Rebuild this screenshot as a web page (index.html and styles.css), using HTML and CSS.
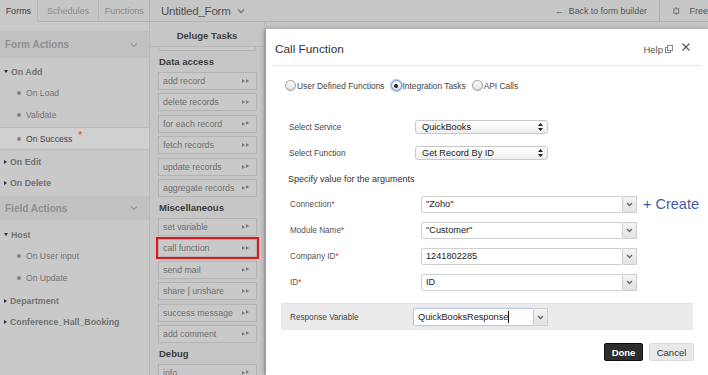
FILE: index.html
```html
<!DOCTYPE html>
<html>
<head>
<meta charset="utf-8">
<link rel="stylesheet" href="styles.css">
</head>
<body>
<div class="app">
  <header class="topbar">
    <nav class="tabs">
      <span class="tab active">Forms</span>
      <span class="tab">Schedules</span>
      <span class="tab">Functions</span>
    </nav>
    <div class="formname">Untitled_Form <svg class="chev" width="8" height="6" viewBox="0 0 8 6"><path d="M1 1.5 L4 4.5 L7 1.5" fill="none" stroke="#777" stroke-width="1.4"/></svg></div>
    <div class="spacer"></div>
    <div class="back">&larr;&nbsp; Back to form builder</div>
    <div class="free"><svg width="12" height="12" viewBox="0 0 12 12"><rect x="2.5" y="3" width="7" height="6" fill="none" stroke="#666" stroke-width="1.2"/><path d="M6 0.5 V3 M6 9 V11.5" stroke="#666" stroke-width="1.2"/></svg><span>Free</span></div>
  </header>
  <div class="main">
    <aside class="sidebar">
      <div class="group-head head-form"><span>Form Actions</span><svg width="8" height="6" viewBox="0 0 8 6"><path d="M1 1.5 L4 4.5 L7 1.5" fill="none" stroke="#9a9a9a" stroke-width="1.2"/></svg></div>
      <div class="node open">On Add</div>
      <div class="leaf">On Load</div>
      <div class="leaf">Validate</div>
      <div class="leaf selected">On Success <span class="req">*</span></div>
      <div class="node">On Edit</div>
      <div class="node">On Delete</div>
      <div class="group-head head-field"><span>Field Actions</span><svg width="8" height="6" viewBox="0 0 8 6"><path d="M1 1.5 L4 4.5 L7 1.5" fill="none" stroke="#9a9a9a" stroke-width="1.2"/></svg></div>
      <div class="node open">Host</div>
      <div class="leaf">On User input</div>
      <div class="leaf">On Update</div>
      <div class="node dept">Department</div>
      <div class="node">Conference_Hall_Booking</div>
    </aside>
    <section class="tasks">
      <div class="tasks-head">Deluge Tasks</div>
      <div class="search"></div>
      <div class="sec first">Data access</div>
      <div class="task">add record<i></i></div>
      <div class="task">delete records<i></i></div>
      <div class="task">for each record<i></i></div>
      <div class="task">fetch records<i></i></div>
      <div class="task">update records<i></i></div>
      <div class="task">aggregate records<i></i></div>
      <div class="sec">Miscellaneous</div>
      <div class="task">set variable<i></i></div>
      <div class="task hl">call function<i></i></div>
      <div class="task">send mail<i></i></div>
      <div class="task">share | unshare<i></i></div>
      <div class="task">success message<i></i></div>
      <div class="task">add comment<i></i></div>
      <div class="sec">Debug</div>
      <div class="task">info<i></i></div>
    </section>
    <section class="canvas"></section>
  </div>

  <div class="modal">
    <div class="m-head">
      <h1>Call Function</h1>
      <span class="help">Help <svg width="8" height="8" viewBox="0 0 8 8"><rect x="0.5" y="2.5" width="5" height="5" fill="#fff" stroke="#888"/><rect x="2.5" y="0.5" width="5" height="5" fill="#fff" stroke="#888"/></svg></span>
      <svg class="close" width="8" height="8" viewBox="0 0 8 8"><path d="M0.5 0.5 L7.5 7.5 M7.5 0.5 L0.5 7.5" stroke="#555" stroke-width="1.1"/></svg>
    </div>
    <div class="radios">
      <label class="radio"><span class="rb"></span>User Defined Functions</label>
      <label class="radio"><span class="rb on"></span>Integration Tasks</label>
      <label class="radio"><span class="rb"></span>API Calls</label>
    </div>
    <div class="srow"><span class="lbl">Select Service</span><div class="select">QuickBooks<svg width="5" height="8" viewBox="0 0 5 8"><path d="M0 3 L2.5 0 L5 3Z M0 5 L2.5 8 L5 5Z" fill="#222"/></svg></div></div>
    <div class="srow"><span class="lbl">Select Function</span><div class="select">Get Record By ID<svg width="5" height="8" viewBox="0 0 5 8"><path d="M0 3 L2.5 0 L5 3Z M0 5 L2.5 8 L5 5Z" fill="#222"/></svg></div></div>
    <div class="spec">Specify value for the arguments</div>
    <div class="arow"><span class="lbl">Connection<b>*</b></span><div class="combo"><div class="inp">"Zoho"</div><div class="dd"><svg width="7" height="5" viewBox="0 0 7 5"><path d="M1 1 L3.5 3.5 L6 1" fill="none" stroke="#666" stroke-width="1.3"/></svg></div></div><span class="create">+ Create</span></div>
    <div class="arow"><span class="lbl">Module Name<b>*</b></span><div class="combo"><div class="inp">"Customer"</div><div class="dd"><svg width="7" height="5" viewBox="0 0 7 5"><path d="M1 1 L3.5 3.5 L6 1" fill="none" stroke="#666" stroke-width="1.3"/></svg></div></div></div>
    <div class="arow"><span class="lbl">Company ID<b>*</b></span><div class="combo"><div class="inp">1241802285</div><div class="dd"><svg width="7" height="5" viewBox="0 0 7 5"><path d="M1 1 L3.5 3.5 L6 1" fill="none" stroke="#666" stroke-width="1.3"/></svg></div></div></div>
    <div class="arow"><span class="lbl">ID<b>*</b></span><div class="combo"><div class="inp">ID</div><div class="dd"><svg width="7" height="5" viewBox="0 0 7 5"><path d="M1 1 L3.5 3.5 L6 1" fill="none" stroke="#666" stroke-width="1.3"/></svg></div></div></div>
    <div class="resp">
      <span class="lbl">Response Variable</span>
      <div class="combo small"><div class="inp">QuickBooksResponse<span class="caret"></span></div><div class="dd"><svg width="7" height="5" viewBox="0 0 7 5"><path d="M1 1 L3.5 3.5 L6 1" fill="none" stroke="#666" stroke-width="1.3"/></svg></div></div>
    </div>
    <div class="actions">
      <button class="btn done">Done</button>
      <button class="btn cancel">Cancel</button>
    </div>
  </div>
</div>
</body>
</html>
```

FILE: styles.css
```css
* { box-sizing: border-box; }
html, body { margin: 0; padding: 0; }
body {
  width: 708px; height: 375px; overflow: hidden;
  font-family: "Liberation Sans", Arial, sans-serif;
  background: #c8c8c8;
  color: #333;
}
.app { position: relative; width: 708px; height: 375px; display: flex; flex-direction: column; }

/* top bar */
.topbar {
  height: 22px; display: flex; align-items: stretch;
  background: #c6c6c6; border-bottom: 1px solid #b3b3b3;
}
.tabs { display: flex; width: 150px; border-right: 1px solid #b3b3b3; }
.tab {
  font-size: 9px; color: #8a8a8a; display: flex; align-items: center; justify-content: center;
  border-right: 1px solid #b7b7b7; height: 21px;
}
.tab:nth-child(1) { width: 38px; color: #3d3d3d; background: #c8c8c8; height: 22px; }
.tab:nth-child(2) { width: 62px; }
.tab:nth-child(3) { width: 50px; border-right: none; }
.formname { font-size: 11.5px; color: #4f4f4f; padding-left: 11px; display: flex; align-items: center; gap: 6px; letter-spacing: -0.2px; }
.spacer { flex: 1; }
.back { font-size: 8.8px; color: #555; display: flex; align-items: center; padding-right: 12px; border-right: 1px solid #b0b0b0; }
.free { font-size: 9px; color: #555; display: flex; align-items: center; gap: 9px; padding-left: 12px; width: 48px; overflow: hidden; white-space: nowrap; }

.main { flex: 1; display: flex; }

/* sidebar */
.sidebar { width: 150px; background: #c9c9c9; border-right: 1px solid #b8b8b8; padding-top: 9px; white-space: nowrap; }
.group-head {
  display: flex; justify-content: space-between; align-items: center;
  height: 27px; padding: 0 11px 0 5px; background: #c1c1c1;
  font-size: 10px; font-weight: bold; color: #8f8f8f;
}
.head-form { margin-bottom: 3px; }
.head-field { margin-top: 3px; margin-bottom: 4px; height: 24px; }
.node {
  height: 21px; display: flex; align-items: center; padding-left: 4px;
  font-size: 8.8px; font-weight: bold; color: #727272;
}
.node.dept { margin-top: 1px; }
.node::before {
  content: ""; display: inline-block; width: 0; height: 0; margin-right: 3px;
  border-top: 2.5px solid transparent; border-bottom: 2.5px solid transparent; border-left: 3px solid #2b2b4a;
}
.node.open::before {
  border-left: 2.5px solid transparent; border-right: 2.5px solid transparent; border-top: 3px solid #2b2b4a; border-bottom: 0;
}
.leaf {
  height: 22px; display: flex; align-items: center; padding-left: 17px;
  font-size: 8.6px; color: #747474;
}
.leaf::before {
  content: ""; width: 4px; height: 4px; border-radius: 50%; background: #858585; margin-right: 5px;
}
.leaf.selected { background: #d0d0d0; border-top: 1px solid #bcbcbc; border-bottom: 1px solid #bcbcbc; color: #3f3f3f; height: 23px; margin: 1px 0 1px; }
.req { color: #d6473d; font-size: 10px; margin-left: 6px; position: relative; top: -3px; }

/* tasks */
.tasks { width: 115px; background: #c6c6c6; border-right: 1px solid #b7b7b7; white-space: nowrap; }
.tasks-head { height: 25px; padding-top: 3px; display: flex; align-items: center; justify-content: center; font-size: 9.5px; font-weight: bold; color: #3e3e3e; border-bottom: 1px solid #b7b7b7; }
.search { height: 4px; margin: 0 8px 0 8px; border: 1px solid #b5b5b5; border-top: none; border-radius: 0 0 3px 3px; background: #cacaca; }
.sec { height: 21px; margin-top: -3.4px; display: flex; align-items: center; padding-left: 9px; font-size: 9.5px; font-weight: bold; color: #3a3a3a; }
.sec.first { height: 21px; margin-top: 0; }
.task {
  height: 18px; margin: 0 7px 3.4px 8px; border: 1px solid #b3b3b3; background: #c9c9c9;
  font-size: 8.8px; color: #6f6f6f; display: flex; align-items: center; justify-content: space-between; padding: 0 4px;
}
.task i { width: 0; height: 0; border-top: 2.5px solid transparent; border-bottom: 2.5px solid transparent; border-left: 3px solid #7a7a7a; position: relative; margin-right: 7px; }
.task i::after { content: ""; position: absolute; left: 1px; top: -2.5px; border-top: 2.5px solid transparent; border-bottom: 2.5px solid transparent; border-left: 3px solid #7a7a7a; }
.task.hl { outline: 2px solid #e2141b; outline-offset: 0px; }
.canvas { flex: 1; background: #c4c4c4; }

/* modal */
.modal {
  position: absolute; left: 266px; top: 29px; right: 0; bottom: 0;
  background: #fff; box-shadow: -2px 0 4px rgba(0,0,0,0.25);
  padding: 0 6px 0 6px;
}
.m-head { height: 37px; display: flex; align-items: center; border-bottom: 1px solid #e6e6e6; padding: 4px 0 0 3px; }
.m-head h1 { margin: 0; font-size: 11.8px; font-weight: normal; color: #333; flex: 1; }
.help { font-size: 9.5px; color: #555; display: flex; align-items: center; gap: 2px; margin-right: 9px; }
.close { margin-right: 12px; margin-top: -5px; }

.radios { display: flex; align-items: center; height: 38px; padding-left: 13px; padding-top: 1px; }
.radio { display: flex; align-items: center; font-size: 8.4px; color: #444; margin-right: 6px; }
.rb { width: 11px; height: 11px; border-radius: 50%; border: 1px solid #9b9b9b; background: linear-gradient(#fff, #ddd); margin-right: 1px; display: flex; align-items: center; justify-content: center; }
.rb.on { border-color: #6b8fd3; box-shadow: 0 0 1px 1px #a9c2ee; }
.rb.on::after { content: ""; width: 4px; height: 4px; border-radius: 50%; background: #222; }

.lbl { font-size: 8.2px; color: #444; width: 126px; flex: none; }
.lbl b { color: #e03030; font-weight: normal; }
.srow { display: flex; align-items: center; height: 26px; padding-left: 17px; }
.radios + .srow { margin-top: 10px; }
.select {
  width: 133px; height: 14px; border: 1px solid #c9c9c9; border-radius: 3px;
  background: linear-gradient(#ffffff, #eeeeee); font-size: 9.2px; color: #222;
  display: flex; align-items: center; justify-content: space-between; padding: 0 4px 0 6px;
}
.spec { font-size: 9px; color: #333; height: 25px; display: flex; align-items: center; padding-left: 16px; }
.arow { display: flex; align-items: center; height: 26px; padding-left: 18px; }
.arow .lbl { width: 131px; color: #555; }
.combo { display: flex; align-items: stretch; height: 17px; }
.inp { width: 202px; border: 1px solid #cfcfcf; border-radius: 2px; font-size: 9.2px; color: #222; display: flex; align-items: center; padding-left: 4px; background: #fff; }
.dd { width: 14px; border: 1px solid #cfcfcf; border-left: none; background: linear-gradient(#f4f4f4, #e2e2e2); display: flex; align-items: center; justify-content: center; }
.create { font-size: 14.5px; color: #3f5cab; margin-left: 6px; }
.resp {
  margin: 8px 9px 0 9px; height: 27px; background: #ebebeb; border-top: 1px solid #e3e3e3;
  display: flex; align-items: center; padding-left: 9px;
}
.resp .lbl { width: 123px; color: #444; }
.combo.small { height: 18px; }
.combo.small .inp { width: 121px; border-color: #b9c9e6; box-shadow: 0 0 2px #c8d8f2; }
.caret { display: inline-block; width: 1px; height: 12px; background: #111; margin-left: 0; }
.actions { display: flex; justify-content: flex-end; gap: 6px; padding: 13px 8px 0 0; }
.btn { height: 18px; font-family: "Liberation Sans", Arial, sans-serif; font-size: 9.5px; border-radius: 2px; padding: 0; }
.done { width: 39px; background: #2d2d2d; color: #fff; border: 1px solid #111; font-weight: bold; }
.cancel { width: 45px; background: #e8e8e8; color: #333; border: 1px solid #dcdcdc; }
```
